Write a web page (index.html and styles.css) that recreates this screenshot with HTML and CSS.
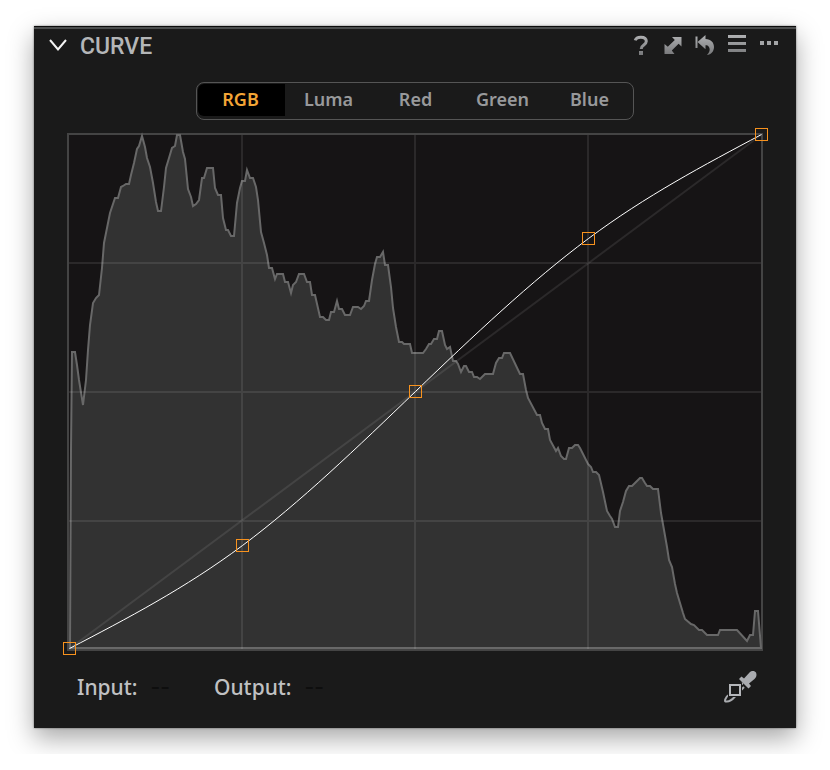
FILE: index.html
```
<!DOCTYPE html>
<html lang="en">
<head>
    <meta charset="UTF-8">
    <meta name="viewport" content="width=device-width, initial-scale=1.0">
    <title>Curve</title>
    <link rel="stylesheet" href="styles.css">
</head>
<body>

    <section class="panel">
        <header class="panel-header">
            <button type="button" class="icon-button" aria-label="Collapse">
                <svg width="20" height="20" viewBox="0 0 20 20">
                    <path d="M2 5 L10 14.5 L18 5" fill="none" stroke="#f4f4f4" stroke-width="2"/>
                </svg>
            </button>
            <h2>CURVE</h2>
            <div class="tools">
                <button type="button" class="icon-button" aria-label="Help">
                    <svg width="20" height="20" viewBox="0 0 20 20">
                        <defs>
                            <linearGradient id="metal" gradientUnits="userSpaceOnUse" x1="0" y1="0" x2="0" y2="20">
                                <stop offset="0" stop-color="#b0b1b3"/>
                                <stop offset="1" stop-color="#77787a"/>
                            </linearGradient>
                        </defs>
                        <path d="M4.2 5.4 C5 2.8 7 2.2 9.8 2.2 C13 2.2 15.3 3.6 15.3 6.3 C15.3 10.4 10.2 9.6 10.2 14" fill="none" stroke="url(#metal)" stroke-width="3"/>
                        <rect x="8" y="16" width="4" height="4" fill="url(#metal)"/>
                    </svg>
                </button>
                <button type="button" class="icon-button" aria-label="Expand">
                    <svg width="20" height="20" viewBox="0 0 20 20">
                        <path d="M9 2 H18.5 V11.5 L15.6 8.8 L8.8 15.6 L11.5 19 H1.5 V9 L4.8 11.8 L11.8 4.9 Z" fill="url(#metal)"/>
                    </svg>
                </button>
                <button type="button" class="icon-button" aria-label="Reset">
                    <svg width="20" height="20" viewBox="0 0 20 20">
                        <path d="M0.5 1.5 H2.5 V13 H0.5 Z" fill="url(#metal)"/>
                        <path d="M2.5 7 L10.5 0 V4 C16 4.4 19 7.5 19 12 C19 16.5 16 19.5 12 20 C14.5 17.5 15.5 14.5 14 12 C13.2 10.6 12 10.2 10.5 10.2 V14.2 Z" fill="url(#metal)"/>
                    </svg>
                </button>
                <button type="button" class="icon-button" aria-label="Menu">
                    <svg width="20" height="20" viewBox="0 0 20 20">
                        <path d="M1 0 H19 V3 H1 Z M1 7 H19 V10 H1 Z M1 14 H19 V17 H1 Z" fill="url(#metal)"/>
                    </svg>
                </button>
                <button type="button" class="icon-button" aria-label="More">
                    <svg width="20" height="20" viewBox="0 0 20 20">
                        <path d="M1 6 H5 V10 H1 Z M8 6 H12 V10 H8 Z M15 6 H19 V10 H15 Z" fill="#a4a5a7"/>
                    </svg>
                </button>
            </div>
        </header>

        <div class="channels">
            <button type="button" class="active">RGB</button>
            <button type="button">Luma</button>
            <button type="button">Red</button>
            <button type="button">Green</button>
            <button type="button">Blue</button>
        </div>

        <svg class="chart" viewBox="0 0 696 518" role="img" aria-label="RGB curve">
            <rect class="frame" x="1" y="1" width="694" height="516"/>
            <path class="histogram" d="M3 515 L4 317 5 219 8 219 10 232 12 247 16 272 19 247 21 217 23 192 26 170 29 165 32 162 35 135 37 110 40 95 43 80 48 65 51 65 54 54 56 53 59 51 62 51 64 42 67 30 70 16 72 13 75 3 78 14 80 25 83 34 86 50 89 69 91 78 94 78 97 54 99 35 102 25 105 15 108 13 110 2 113 2 116 19 118 26 121 56 124 64 126 73 129 71 132 67 135 45 137 45 140 35 146 35 148 55 151 62 154 62 156 85 159 97 161 97 164 103 167 103 170 70 173 55 175 48 178 48 180 37 183 45 186 45 189 54 191 67 194 99 197 110 200 122 202 135 205 135 208 146 210 141 216 141 218 149 221 149 224 160 226 152 229 149 232 141 237 141 240 149 243 149 245 162 248 162 253 184 256 184 259 187 262 187 264 179 267 179 270 168 272 176 275 176 278 182 283 182 286 174 291 174 294 176 297 173 299 168 302 168 305 147 308 131 310 124 313 124 316 119 318 132 321 132 324 154 326 175 329 194 332 209 335 209 337 211 343 211 345 220 356 220 359 216 362 211 364 211 367 206 370 206 372 198 375 198 378 212 380 216 383 214 386 228 389 228 391 231 394 239 397 233 399 233 402 239 405 239 407 244 410 244 413 246 418 241 426 241 429 230 432 225 435 225 437 220 443 220 453 241 456 241 459 257 461 265 470 282 473 282 475 290 478 296 481 296 483 307 489 318 491 315 494 323 497 326 499 326 502 315 505 315 508 312 511 312 513 315 521 331 524 334 526 339 529 339 532 342 536 359 540 378 543 383 545 386 548 394 551 394 553 378 556 369 559 358 562 353 565 353 573 345 575 345 578 350 580 353 583 353 586 356 591 356 594 380 597 397 600 414 602 427 605 434 608 451 610 460 616 480 618 486 624 491 627 492 632 497 635 497 640 502 651 502 653 497 670 497 680 508 683 502 686 502 688 478 691 478 694 515 Z"/>
            <path class="grid" d="M175 2 V516 M348 2 V516 M521 2 V516 M2 130 H694 M2 259 H694 M2 388 H694"/>
            <path class="grid" d="M2 516 L694 2"/>
            <path class="curve" d="M2.5 515.5 C60 485.5 118 455.4 175.5 412.5 C233 369.6 291 313.8 348.5 258.5 C406 203.2 464 148.3 521.5 105.5 C579 62.7 637 32.1 694.5 1.5"/>
            <g class="handles">
                <rect x="-3.5" y="509.5" width="12" height="12"/>
                <rect x="169.5" y="406.5" width="12" height="12"/>
                <rect x="342.5" y="252.5" width="12" height="12"/>
                <rect x="515.5" y="99.5" width="12" height="12"/>
                <rect x="688.5" y="-4.5" width="12" height="12"/>
            </g>
        </svg>

        <footer class="panel-footer">
            <div class="readout">
                <label for="input-value">Input:</label>
                <output id="input-value">--</output>
            </div>
            <div class="readout">
                <label for="output-value">Output:</label>
                <output id="output-value">--</output>
            </div>
            <button type="button" class="icon-button picker" aria-label="Pick curve point">
                <svg width="34" height="34" viewBox="0 0 34 34">
                    <path d="M20 13 L7 24 C2 27 1 32 3 31.5 C6 32 9 30 12 26.5 L21 17" fill="none" stroke="#a9abaf" stroke-width="2"/>
                    <path d="M16 9 L18.5 6.5 L21 8.5 L26.5 2.5 C29 0 32 1 33 2.5 C34 5 33.5 7 31.5 9 L26 13.5 L28 16 L25.5 18.5 Z" fill="#a9abaf"/>
                    <rect x="5" y="13" width="14" height="14" fill="#1a1a1a"/>
                    <rect x="7" y="15" width="10" height="10" fill="#1a1a1a" stroke="#b4b6ba" stroke-width="2"/>
                </svg>
            </button>
        </footer>
    </section>

</body>
</html>
```
FILE: styles.css
```
body {
    margin: 0;
    padding: 26px 34px;
    background-color: #ffffff;
    font-family: 'Noto Sans', 'Open Sans', sans-serif;
}

.panel {
    background-color: #1a1a1a;
    border-top: 1px solid #0c0c0c;
    box-shadow: 0 0 2px rgba(0, 0, 0, 0.5), 0 10px 24px rgba(0, 0, 0, 0.35);
}

.panel-header {
    display: flex;
    align-items: center;
    height: 32px;
    padding: 0 17px 0 14px;
    border-top: 2px solid #4c4e4e;
}

h2 {
    margin: 0 0 0 12px;
    padding-top: 3px;
    font-family: Roboto, sans-serif;
    font-size: 23px;
    font-weight: 500;
    line-height: 32px;
    color: #b4b6b8;
}

.tools {
    display: flex;
    gap: 12px;
    margin-left: auto;
}

.icon-button {
    display: block;
    padding: 0;
    border: none;
    background: none;
    cursor: pointer;
}

.icon-button svg {
    display: block;
}

.channels {
    display: grid;
    grid-template-columns: repeat(5, 1fr);
    box-sizing: border-box;
    max-width: 438px;
    height: 38px;
    margin: 21px auto 13px;
    padding: 1px 0 3px 1px;
    border: 1px solid #555555;
    border-radius: 8px;
}

.channels button {
    padding: 0 0 2px;
    border: none;
    background: none;
    font-family: 'Noto Sans', 'Open Sans', sans-serif;
    font-size: 18px;
    font-weight: 600;
    color: #98999b;
    cursor: pointer;
}

.channels .active {
    padding-right: 2px;
    border-radius: 6px 0 0 6px;
    background-color: #000000;
    color: #f3a536;
}

.chart {
    display: block;
    margin: 0 33px;
    overflow: visible;
}

.frame {
    fill: #161415;
    stroke: #444444;
    stroke-width: 2;
}

.histogram {
    fill: #323232;
    stroke: #686868;
    stroke-width: 2;
}

.grid {
    fill: none;
    stroke: rgba(255, 255, 255, 0.09);
    stroke-width: 2;
}

.curve {
    fill: none;
    stroke: #ffffff;
    stroke-width: 1;
}

.handles {
    fill: none;
    stroke: #f7921e;
    stroke-width: 1;
}

.panel-footer {
    display: flex;
    align-items: center;
    gap: 44px;
    height: 72px;
    padding: 0 39px 5px 43px;
}

.readout {
    display: flex;
    gap: 13px;
    font-size: 21px;
    font-weight: 500;
    line-height: 32px;
    color: #c0c1c3;
}

.readout output {
    font-family: Inter, sans-serif;
    color: #0e0e0e;
}

.picker {
    margin-left: auto;
}
```
